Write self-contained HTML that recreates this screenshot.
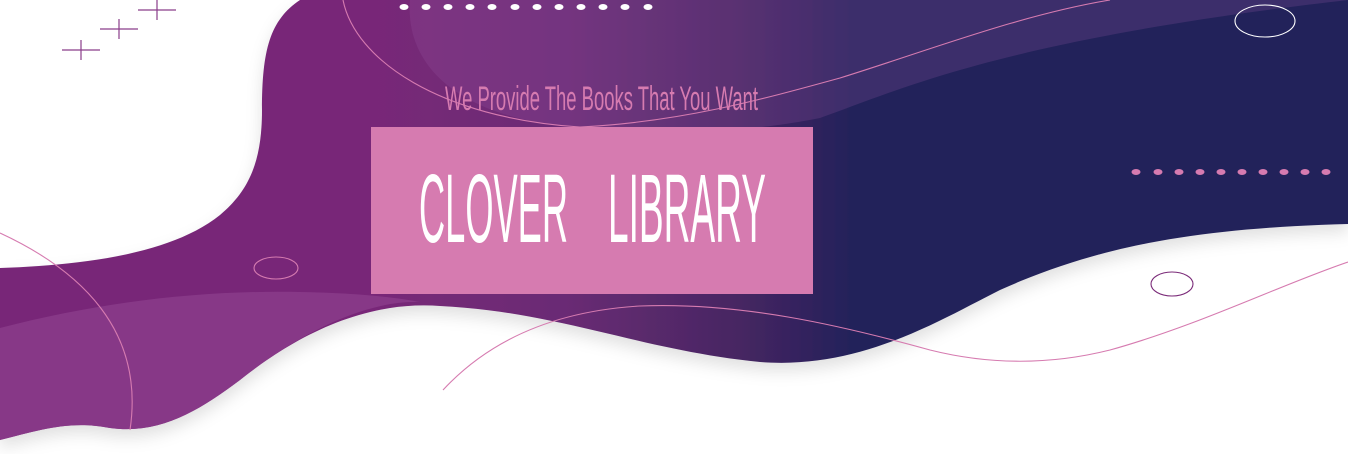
<!DOCTYPE html>
<html><head><meta charset="utf-8"><style>
html,body{margin:0;padding:0;background:#fff;width:1348px;height:454px;overflow:hidden}
svg{display:block}
</style></head><body>
<svg width="1348" height="454" viewBox="0 0 1348 454" xmlns="http://www.w3.org/2000/svg">
<defs>
<linearGradient id="g" x1="0" y1="0" x2="1348" y2="0" gradientUnits="userSpaceOnUse">
<stop offset="0" stop-color="#782878"/>
<stop offset="0.28" stop-color="#782878"/>
<stop offset="0.42" stop-color="#6a2c74"/>
<stop offset="0.55" stop-color="#462662"/>
<stop offset="0.63" stop-color="#24205a"/>
<stop offset="1" stop-color="#22205a"/>
</linearGradient>
<filter id="sh" x="-10%" y="-10%" width="120%" height="130%">
<feDropShadow dx="0" dy="8" stdDeviation="8" flood-color="#000" flood-opacity="0.12"/>
</filter>
</defs>
<path filter="url(#sh)" fill="url(#g)" d="M300,0 C270,20 262,50 262,110 C262,160 250,190 220,215 C170,255 80,265 0,268 L0,440 C40,430 70,420 110,428 C160,435 200,410 240,380 C290,340 360,300 440,306 C560,312 640,350 760,362 C860,370 940,320 1000,290 C1100,245 1200,228 1348,224 L1348,0 Z"/>
<path fill="#9a5aa8" opacity="0.22" d="M410,0 C405,60 450,115 570,127 C700,135 760,130 820,118 C900,90 1000,40 1348,0 Z"/>
<path fill="#8a3c8a" opacity="0.85" d="M0,328 C100,302 200,290 300,292 C360,293 400,298 420,302 C360,300 290,340 240,380 C200,410 160,435 110,428 C70,420 40,430 0,440 Z"/>
<g fill="none" stroke-width="1.1">
<path stroke="#d67bb0" d="M0,233 C80,270 145,330 130,430"/>
<path stroke="#d67bb0" d="M343,0 C355,60 440,118 580,127 C680,122 760,100 840,78 C930,50 1020,15 1110,0"/>
<path stroke="#d67bb0" d="M443,390 C480,350 540,312 640,306 C740,302 840,325 930,350 C990,365 1050,365 1110,350 C1200,325 1280,285 1348,262"/>
<ellipse cx="276" cy="268" rx="22" ry="11" stroke="#d67bb0"/>
<ellipse cx="1265" cy="21" rx="30" ry="16" stroke="#fff"/>
<ellipse cx="1172" cy="284" rx="21" ry="12" stroke="#7a2a78"/>
</g>
<g stroke="#8a3d8a" stroke-width="1.2">
<path d="M62,50 H100 M81,40 V60"/>
<path d="M100,29 H138 M119,19 V39"/>
<path d="M138,10 H176 M157,0 V20"/>
</g>
<g fill="#fff">
<ellipse cx="404" cy="7" rx="4.5" ry="3"/><ellipse cx="426" cy="7" rx="4.5" ry="3"/><ellipse cx="448" cy="7" rx="4.5" ry="3"/><ellipse cx="470" cy="7" rx="4.5" ry="3"/><ellipse cx="492" cy="7" rx="4.5" ry="3"/><ellipse cx="515" cy="7" rx="4.5" ry="3"/><ellipse cx="537" cy="7" rx="4.5" ry="3"/><ellipse cx="559" cy="7" rx="4.5" ry="3"/><ellipse cx="581" cy="7" rx="4.5" ry="3"/><ellipse cx="603" cy="7" rx="4.5" ry="3"/><ellipse cx="625" cy="7" rx="4.5" ry="3"/><ellipse cx="648" cy="7" rx="4.5" ry="3"/>
</g>
<g fill="#d67bb0">
<ellipse cx="1136" cy="172" rx="4.5" ry="3"/><ellipse cx="1158" cy="172" rx="4.5" ry="3"/><ellipse cx="1179" cy="172" rx="4.5" ry="3"/><ellipse cx="1200" cy="172" rx="4.5" ry="3"/><ellipse cx="1221" cy="172" rx="4.5" ry="3"/><ellipse cx="1242" cy="172" rx="4.5" ry="3"/><ellipse cx="1263" cy="172" rx="4.5" ry="3"/><ellipse cx="1284" cy="172" rx="4.5" ry="3"/><ellipse cx="1305" cy="172" rx="4.5" ry="3"/><ellipse cx="1326" cy="172" rx="4.5" ry="3"/>
</g>
<rect x="371" y="127" width="442" height="167" fill="#d67bb0"/>
<text x="445" y="110" font-family="Liberation Sans, sans-serif" font-size="34" fill="#d67bb0" textLength="313" lengthAdjust="spacingAndGlyphs">We  Provide The Books That You Want</text>
<text x="419" y="242" font-family="Liberation Sans, sans-serif" font-size="97" fill="#fff" textLength="149" lengthAdjust="spacingAndGlyphs">CLOVER</text>
<text x="608" y="242" font-family="Liberation Sans, sans-serif" font-size="97" fill="#fff" textLength="158" lengthAdjust="spacingAndGlyphs">LIBRARY</text>
</svg>
</body></html>
